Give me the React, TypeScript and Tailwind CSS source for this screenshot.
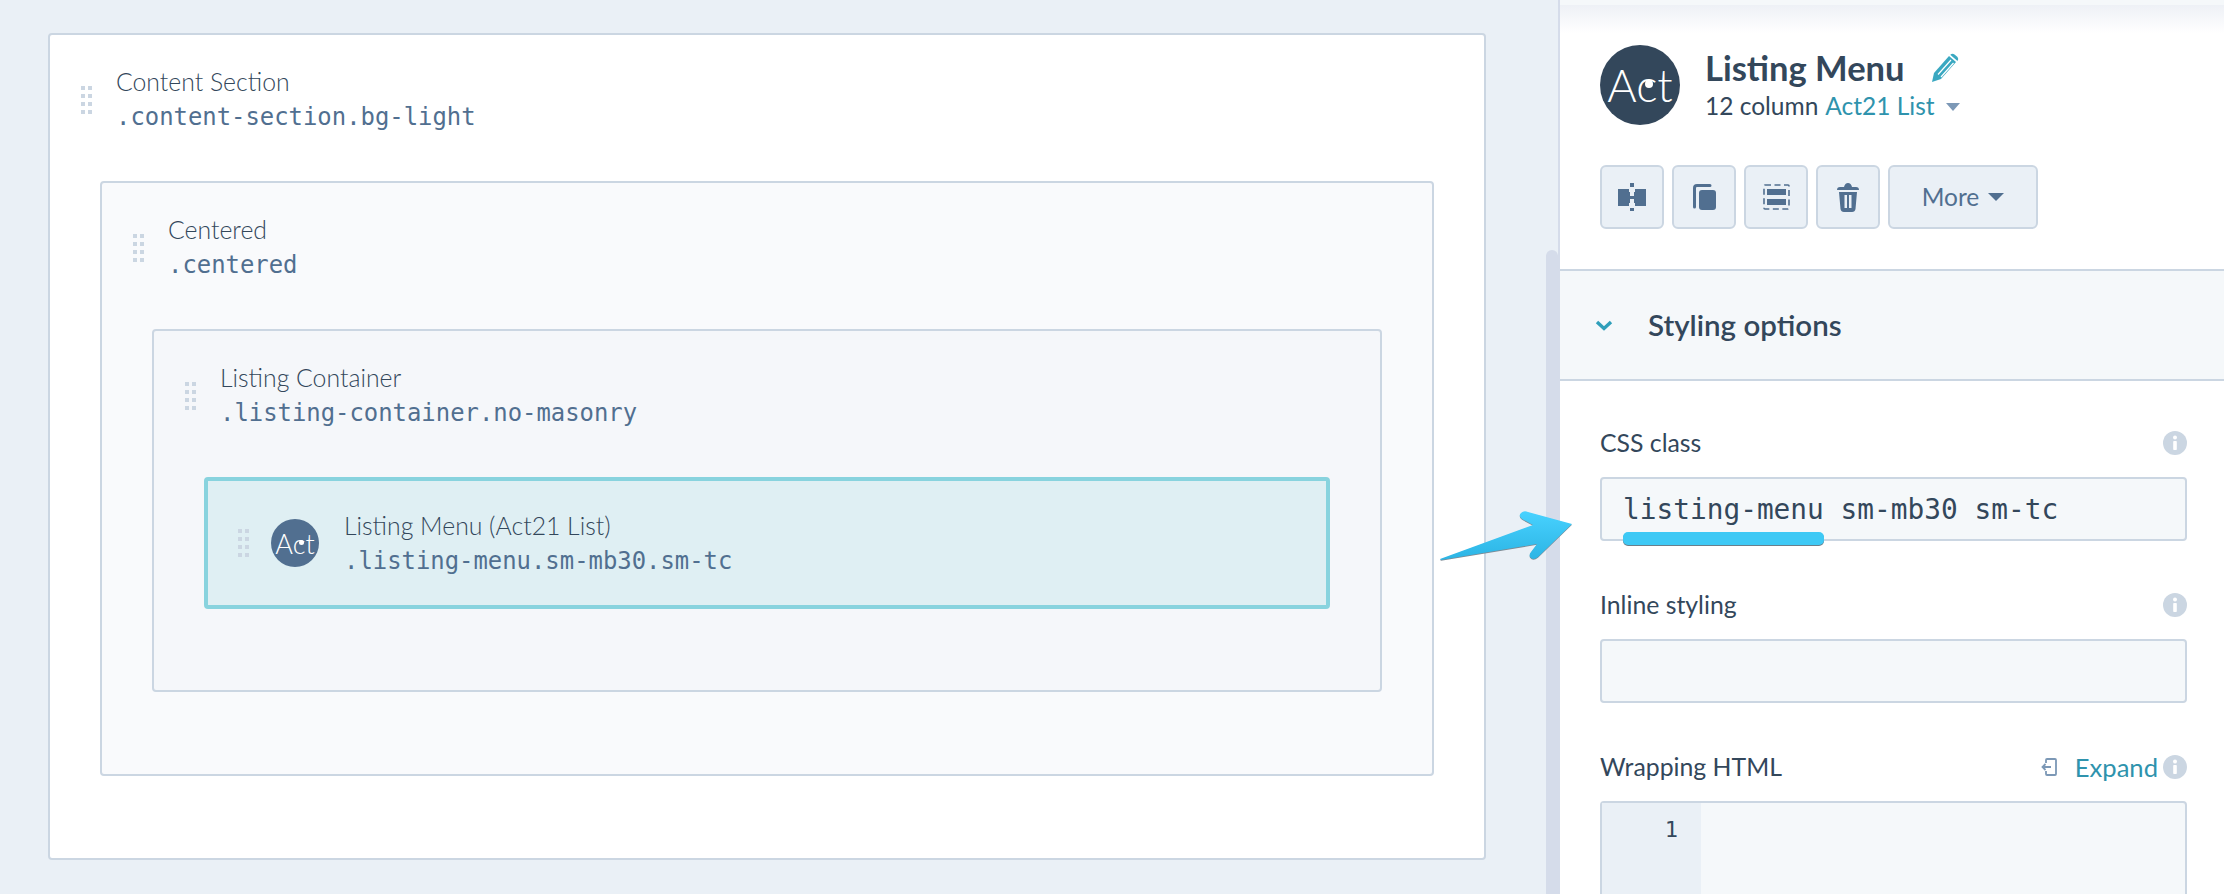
import type { ReactNode } from "react";

const MONO = "font-['DejaVu_Sans_Mono',monospace]";

function DragHandle() {
  return (
    <div className="grid h-[28px] w-[11px] shrink-0 grid-cols-[4px_4px] gap-x-[3px] gap-y-[4px]">
      {Array.from({ length: 8 }).map((_, i) => (
        <span key={i} className="h-[4px] w-[4px] bg-[#cbd6e2]" />
      ))}
    </div>
  );
}

function ActLogo({ bg, size }: { bg: string; size: "sm" | "lg" }) {
  const large = size === "lg";
  return (
    <div
      className={`flex shrink-0 items-center justify-center rounded-full text-white ${bg} ${
        large ? "h-[80px] w-[80px] text-[45px]" : "h-[48px] w-[48px] text-[27px]"
      }`}
    >
      <span className="leading-none font-light">
        A
        <span className="relative">
          c
          <span
            className={`absolute rounded-full bg-white ${
              large
                ? "left-[9px] top-[22px] h-[8px] w-[8px]"
                : "left-[6px] top-[13px] h-[5px] w-[5px]"
            }`}
          />
        </span>
        t
      </span>
    </div>
  );
}

type HeadingProps = { title: string; selector: string; logo?: boolean };

function Heading({ title, selector, logo }: HeadingProps) {
  return (
    <div className="flex items-center">
      <DragHandle />
      {logo && (
        <div className="ml-[22px]">
          <ActLogo bg="bg-[#516f90]" size="sm" />
        </div>
      )}
      <div className={logo ? "ml-[25px]" : "ml-[24px]"}>
        <div className="text-[24.8px] leading-[35px] font-light text-[#33475b]">{title}</div>
        <div className={`${MONO} text-[23.9px] leading-[36px] text-[#516f90]`}>{selector}</div>
      </div>
    </div>
  );
}

type BoxProps = HeadingProps & { tone: string; bottom: string; children: ReactNode };

// one nesting level of the page tree, each sits 52px inside its parent
function Box({ title, selector, tone, bottom, children }: BoxProps) {
  return (
    <div className={`rounded-[4px] border-2 border-[#cbd6e2] pt-[29px] ${tone}`}>
      <div className="pl-[31px]">
        <Heading title={title} selector={selector} />
      </div>
      <div className={`mt-[46px] px-[50px] ${bottom}`}>{children}</div>
    </div>
  );
}

function ToolButton({ children }: { children: ReactNode }) {
  return (
    <button className="flex h-[64px] w-[64px] items-center justify-center rounded-[6px] border-2 border-[#cbd6e2] bg-[#eaf0f6]">
      {children}
    </button>
  );
}

function InfoIcon() {
  return (
    <svg width="24" height="24" viewBox="0 0 24 24" className="shrink-0">
      <circle cx="12" cy="12" r="12" fill="#cbd6e2" />
      <circle cx="12" cy="6.5" r="2" fill="#fff" />
      <rect x="10.2" y="10" width="3.6" height="9" rx="0.8" fill="#fff" />
    </svg>
  );
}

function Field({ label, right, children }: { label: string; right?: ReactNode; children: ReactNode }) {
  return (
    <div className="mb-[46px]">
      <div className="mb-[16px] flex h-[36px] items-center justify-between">
        <span className="text-[24.8px] text-[#33475b]">{label}</span>
        <div className="flex items-center">
          {right}
          <InfoIcon />
        </div>
      </div>
      {children}
    </div>
  );
}

const inputClass = "h-[64px] rounded-[4px] border-2 border-[#cbd6e2] bg-[#f5f8fa]";

export default function App() {
  return (
    <div className="relative flex h-[894px] w-[2224px] overflow-hidden bg-[#eaf0f6] font-[Lato,sans-serif]">
      <main className="flex-1 pl-[48px] pr-[60px] pt-[33px]">
        <Box title="Content Section" selector=".content-section.bg-light" tone="bg-white" bottom="pb-[82px]">
          <Box title="Centered" selector=".centered" tone="bg-[#f9fafc]" bottom="pb-[82px]">
            <Box title="Listing Container" selector=".listing-container.no-masonry" tone="bg-[#f5f7fa]" bottom="pb-[81px]">
              <div className="flex h-[132px] items-center rounded-[4px] border-4 border-[#88d3de] bg-[#dfeff3] pl-[30px]">
                <Heading title="Listing Menu (Act21 List)" selector=".listing-menu.sm-mb30.sm-tc" logo />
              </div>
            </Box>
          </Box>
        </Box>
      </main>

      {/* scrollbar */}
      <div className="w-[12px] shrink-0 pt-[250px]">
        <div className="h-full rounded-t-[6px] bg-[#d5dcea]" />
      </div>

      <aside className="w-[666px] shrink-0 border-l-2 border-[#d5dcea] bg-white">
        <div className="h-[5px] bg-[#f5f8fa]" />
        <div className="h-[28px] bg-gradient-to-b from-[#eef1f6] to-white" />

        <div className="mt-[12px] flex pl-[40px]">
          <ActLogo bg="bg-[#33475b]" size="lg" />
          <div className="ml-[25px]">
            <div className="flex items-center">
              <span className="text-[34.5px] leading-[45px] font-bold text-[#33475b]">Listing Menu</span>
              <svg width="28" height="30" viewBox="0 0 28 30" className="ml-[26px]">
                <path d="M1 29 L3 20 L18 3 L25 9 L10 26 Z" fill="#3aa8c1" />
                <path d="M19.5 1.5 Q21.5 0 23.5 1.5 L26.5 4 Q28 6 26.5 8 L19.5 2 Z" fill="#3aa8c1" />
                <path d="M7 21.5 L20 7 M10 24 L22.5 10" stroke="#fff" strokeWidth="1.2" />
              </svg>
            </div>
            <div className="flex items-center text-[24.5px] leading-[32px] text-[#33475b]">
              12 column <span className="ml-[7px] text-[#2f93ad]">Act21 List</span>
              <span className="ml-[11px] mt-[2px] h-0 w-0 border-x-[7px] border-t-[8px] border-x-transparent border-t-[#7c98b6]" />
            </div>
          </div>
        </div>

        <div className="mt-[40px] flex gap-[8px] pl-[40px]">
          <ToolButton>
            <svg width="28" height="28" viewBox="0 0 28 28" fill="#516f90">
              <rect x="0" y="6" width="11" height="17" />
              <rect x="17" y="6" width="11" height="17" />
              <rect x="11" y="9" width="6" height="11" />
              <rect x="12" y="0" width="4" height="4" />
              <rect x="12" y="8" width="4" height="5" fill="#eaf0f6" />
              <rect x="12" y="16" width="4" height="5" fill="#eaf0f6" />
              <rect x="12" y="25" width="4" height="3" />
            </svg>
          </ToolButton>
          <ToolButton>
            <svg width="23" height="26" viewBox="0 0 23 26" fill="#516f90">
              <rect x="6" y="6" width="17" height="20" rx="3" />
              <path d="M1.5 23 V4 Q1.5 1.5 4 1.5 H17" fill="none" stroke="#516f90" strokeWidth="3" strokeLinecap="round" />
            </svg>
          </ToolButton>
          <ToolButton>
            <svg width="27" height="26" viewBox="0 0 27 26" fill="#516f90">
              <rect x="1" y="1" width="25" height="24" rx="1" fill="none" stroke="#516f90" strokeWidth="1.6" strokeDasharray="6 3.5" />
              <rect x="4" y="5" width="19" height="6" />
              <rect x="4" y="15" width="19" height="6" />
            </svg>
          </ToolButton>
          <ToolButton>
            <svg width="22" height="29" viewBox="0 0 22 29" fill="#516f90">
              <path d="M0 7 Q0 4 3 4 H7 Q8 0 11 0 Q14 0 15 4 H19 Q22 4 22 7 Z" />
              <path fillRule="evenodd" d="M2 9 H20 L18.5 26 Q18 29 15 29 H7 Q4 29 3.5 26 Z M7.5 12 V25 H10 V12 Z M12 12 V25 H14.5 V12 Z" />
            </svg>
          </ToolButton>
          <button className="flex h-[64px] w-[150px] items-center justify-center rounded-[6px] border-2 border-[#cbd6e2] bg-[#eaf0f6] text-[24.5px] text-[#516f90]">
            More
            <span className="ml-[9px] h-0 w-0 border-x-[8px] border-t-[8px] border-x-transparent border-t-[#516f90]" />
          </button>
        </div>

        <div className="mt-[40px] flex h-[112px] items-center border-y-2 border-[#cbd6e2] bg-[#f5f8fa] pl-[35px]">
          <svg width="18" height="11" viewBox="0 0 18 11" fill="none">
            <path d="M2 2 L9 8.5 L16 2" stroke="#2f9fba" strokeWidth="3.4" />
          </svg>
          <span className="ml-[35px] text-[29.5px] font-semibold text-[#33475b]">Styling options</span>
        </div>

        <div className="mt-[44px] pl-[40px] pr-[37px]">
          <Field label="CSS class">
            <div className={`${inputClass} ${MONO} flex items-center pl-[21px] pt-[2px] text-[27.8px] text-[#33475b]`}>
              listing-menu sm-mb30 sm-tc
            </div>
          </Field>
          <Field label="Inline styling">
            <div className={inputClass} />
          </Field>
          <Field
            label="Wrapping HTML"
            right={
              <>
                <svg width="16" height="18" viewBox="0 0 16 18" fill="none" stroke="#7c98b6" strokeWidth="1.8">
                  <path d="M5 5 V2 Q5 1 6 1 H14 Q15 1 15 2 V16 Q15 17 14 17 H6 Q5 17 5 16 V13" />
                  <path d="M10 9 H2 M4.5 6 L1.5 9 L4.5 12" />
                </svg>
                <span className="ml-[18px] mr-[5px] text-[25.6px] text-[#2f93ad]">Expand</span>
              </>
            }
          >
            <div className="flex h-[140px] rounded-t-[4px] border-2 border-[#cbd6e2] bg-[#f5f8fa]">
              <div className={`${MONO} w-[99px] bg-[#eaf0f6] pr-[23px] pt-[10px] text-right text-[22px] text-[#33475b]`}>1</div>
            </div>
          </Field>
        </div>
      </aside>

      {/* annotation drawn over the screenshot */}
      <div className="absolute left-[1623px] top-[532px] h-[13px] w-[201px] rounded-[5px] bg-[#3ec9f5] shadow-[0_1px_0_#6b7f8a]" />
      <svg width="200" height="100" viewBox="0 0 200 100" className="absolute left-[1430px] top-[490px]">
        <defs>
          <linearGradient id="arrowFill" x1="0" y1="0" x2="0" y2="1">
            <stop offset="0" stopColor="#48d2ff" />
            <stop offset="1" stopColor="#2cb4e4" />
          </linearGradient>
        </defs>
        <path d="M10 69 L103 35 L92 29 Q88 26 91 23 Q94 20 98 22 L142 34 L108 67 Q103 71 100 67 Q99 64 101 62 L107 54 L11 70 Z" fill="#7d8a94" transform="translate(0 0.8)" />
        <path d="M10 69 L103 35 L92 29 Q88 26 91 23 Q94 20 98 22 L142 34 L108 67 Q103 71 100 67 Q99 64 101 62 L107 54 L11 70 Z" fill="url(#arrowFill)" />
      </svg>
    </div>
  );
}
